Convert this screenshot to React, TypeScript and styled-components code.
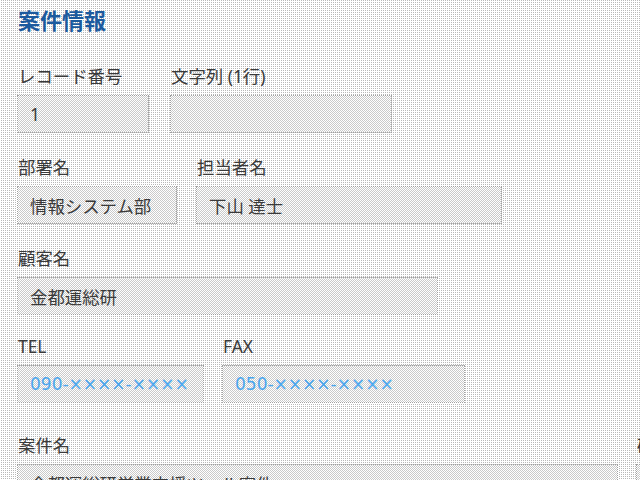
import React from "react";
import styled, { createGlobalStyle } from "styled-components";

const Global = createGlobalStyle`
  html, body {
    margin: 0;
    padding: 0;
  }
  body {
    width: 640px;
    height: 480px;
    overflow: hidden;
    font-family: "Noto Sans", "Noto Sans CJK JP", sans-serif;
    background: conic-gradient(#b8b8b8 0 25%, #ffffff 0) 0 0 / 2px 2px;
  }
`;

const Page = styled.div`
  padding: 4px 0 0 17px;
  width: 720px;
`;

const Title = styled.h2`
  margin: 0 0 31px 1px;
  font-size: 22px;
  line-height: 30px;
  font-weight: 700;
  color: #1c5a9e;
  font-family: "Noto Sans CJK JP", sans-serif;
`;

const Row = styled.div<{ $gap?: number; $mb?: number }>`
  display: flex;
  gap: ${(p) => p.$gap ?? 20}px;
  margin-bottom: ${(p) => p.$mb ?? 23}px;
`;

const Group = styled.div<{ $w: number }>`
  display: flex;
  flex-direction: column;
  width: ${(p) => p.$w}px;
  flex: none;
`;

const Label = styled.div`
  height: 22px;
  line-height: 22px;
  margin: 0 0 8px 1px;
  font-size: 17.4px;
  color: #3a3a3a;
  white-space: nowrap;
`;

const Field = styled.div<{ $link?: boolean }>`
  box-sizing: border-box;
  height: 38px;
  border: 1px dotted #a0a0a0;
  padding: 0 0 0 12px;
  display: flex;
  align-items: center;
  font-size: 17.4px;
  white-space: nowrap;
  overflow: hidden;
  color: ${(p) => (p.$link ? "#4aa6ee" : "#3a3a3a")};
  font-family: ${(p) => (p.$link ? '"DejaVu Sans", sans-serif' : "inherit")};
  ${(p) => (p.$link ? "font-size: 17px;" : "")}
  background: conic-gradient(#cacaca 0 25%, #ffffff 0 50%, #cacaca 0 75%, #ffffff 0) 0 0 / 2px 2px;
`;

export default function App() {
  return (
    <>
      <Global />
      <Page>
        <Title>案件情報</Title>
        <Row $gap={21}>
          <Group $w={132}>
            <Label>レコード番号</Label>
            <Field>1</Field>
          </Group>
          <Group $w={222}>
            <Label>文字列 (1行)</Label>
            <Field />
          </Group>
        </Row>
        <Row $gap={19}>
          <Group $w={160}>
            <Label>部署名</Label>
            <Field>情報システム部</Field>
          </Group>
          <Group $w={306}>
            <Label>担当者名</Label>
            <Field>下山 達士</Field>
          </Group>
        </Row>
        <Row $mb={20}>
          <Group $w={421}>
            <Label>顧客名</Label>
            <Field>金都運総研</Field>
          </Group>
        </Row>
        <Row $gap={18} $mb={31}>
          <Group $w={187}>
            <Label>TEL</Label>
            <Field $link>090-××××-××××</Field>
          </Group>
          <Group $w={243}>
            <Label>FAX</Label>
            <Field $link>050-××××-××××</Field>
          </Group>
        </Row>
        <Row $gap={18}>
          <Group $w={601}>
            <Label>案件名</Label>
            <Field>金都運総研営業支援ツール案件</Field>
          </Group>
          <Group $w={200}>
            <Label>確度</Label>
            <Field />
          </Group>
        </Row>
      </Page>
    </>
  );
}
